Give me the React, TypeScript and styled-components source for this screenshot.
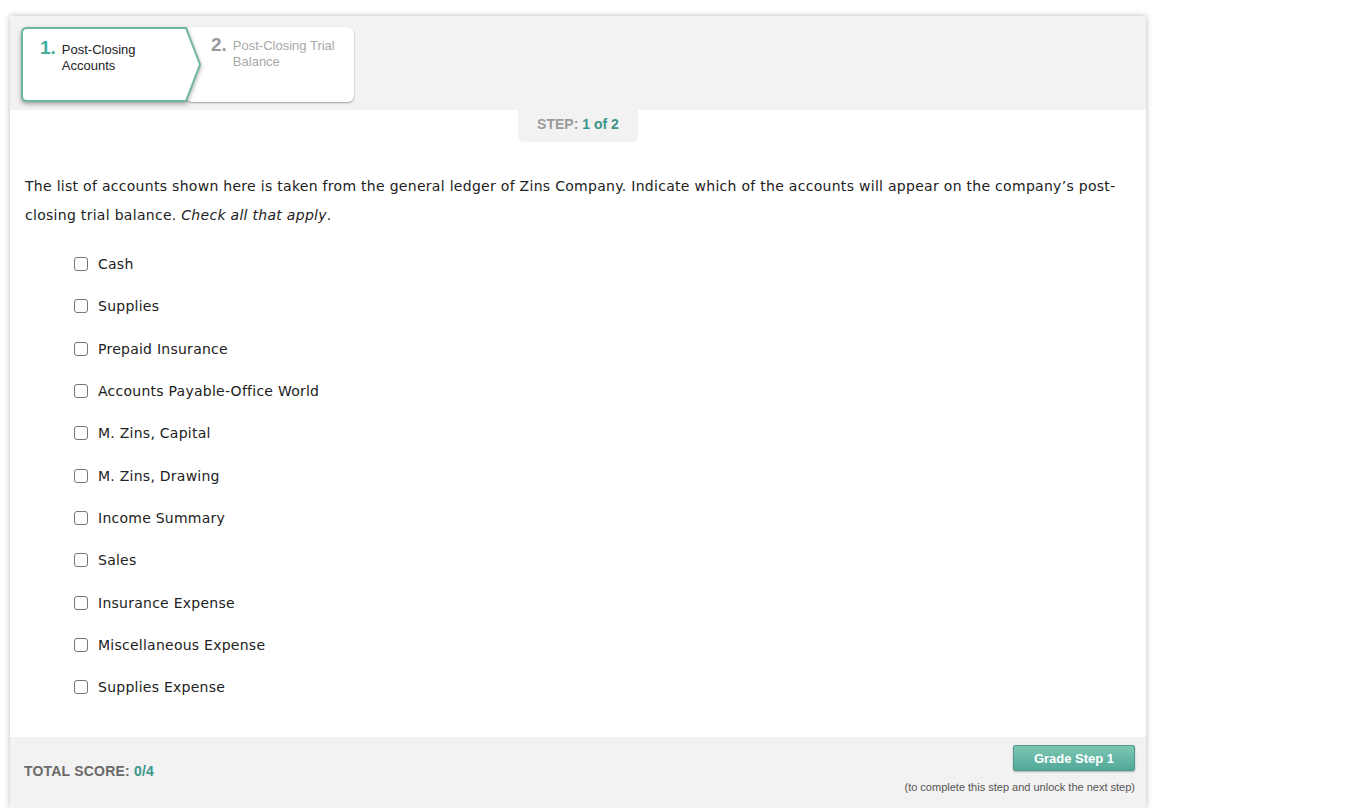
import styled, { createGlobalStyle } from 'styled-components'

const GlobalStyle = createGlobalStyle`
  html, body {
    margin: 0;
    padding: 0;
    background: #fff;
  }
  body {
    font-family: 'Liberation Sans', Arial, sans-serif;
  }
`

const accounts = [
  'Cash',
  'Supplies',
  'Prepaid Insurance',
  'Accounts Payable-Office World',
  'M. Zins, Capital',
  'M. Zins, Drawing',
  'Income Summary',
  'Sales',
  'Insurance Expense',
  'Miscellaneous Expense',
  'Supplies Expense',
]

const Page = styled.div`
  padding: 16px 0 0 10px;
`

const Card = styled.div`
  width: 1136px;
  height: 792px;
  display: flex;
  flex-direction: column;
  background: #fff;
  box-shadow: 0 0 6px rgba(0, 0, 0, 0.28);
`

const Header = styled.div`
  background: #f2f2f2;
  height: 94px;
  padding: 11px 0 0 11px;
  box-sizing: border-box;
  display: flex;
  align-items: flex-start;
`

const Tab = styled.div<{ $active?: boolean }>`
  position: relative;
  height: 75px;
  box-sizing: border-box;
  display: flex;
  align-items: flex-start;
  font-family: 'Liberation Sans', Arial, sans-serif;
  ${({ $active }) =>
    $active
      ? `
    width: 180px;
    padding: 11px 0 0 19px;
    z-index: 2;
  `
      : `
    width: 168px;
    margin-left: -15px;
    padding: 8px 0 0 25px;
    background: #fff;
    border-radius: 6px;
    box-shadow: 0 1px 2px rgba(0,0,0,0.35);
    z-index: 1;
  `}
`

const TabShape = styled.svg`
  position: absolute;
  left: 0;
  top: 0;
  width: 180px;
  height: 75px;
  overflow: visible;
  filter: drop-shadow(0 2px 2px rgba(0, 0, 0, 0.35));
`

const TabNum = styled.span<{ $active?: boolean }>`
  position: relative;
  font-size: 19px;
  font-weight: bold;
  color: ${({ $active }) => ($active ? '#3fae9c' : '#9a9a9a')};
  margin-right: 6px;
  line-height: 20px;
`

const TabLabel = styled.span<{ $active?: boolean }>`
  position: relative;
  font-size: 13px;
  line-height: 16px;
  color: ${({ $active }) => ($active ? '#222' : '#a8a8a8')};
  padding-top: ${({ $active }) => ($active ? '4px' : '3px')};
  width: 112px;
`

const StepWrap = styled.div`
  display: flex;
  justify-content: center;
`

const StepPill = styled.div`
  width: 120px;
  height: 32px;
  box-sizing: border-box;
  padding-top: 6px;
  background: #f2f2f2;
  border-radius: 0 0 6px 6px;
  display: flex;
  align-items: flex-start;
  justify-content: center;
  font-family: 'Liberation Sans', Arial, sans-serif;
  font-size: 14px;
  font-weight: bold;
  color: #9a9a9a;
`

const Teal = styled.span`
  color: #3a9488;
  margin-left: 4px;
`

const Body = styled.div`
  flex: 1;
  padding: 30px 15px 0 15px;
  font-family: 'DejaVu Sans', Verdana, sans-serif;
  font-size: 14px;
  color: #222;
`

const Prompt = styled.p`
  margin: 0;
  line-height: 29px;
  letter-spacing: 0.29px;
`

const List = styled.div`
  display: flex;
  flex-direction: column;
  margin-top: 13px;
  padding-left: 49px;
`

const Row = styled.label`
  display: flex;
  align-items: center;
  height: 42.3px;
  letter-spacing: 0.25px;
`

const Box = styled.input`
  appearance: none;
  width: 14px;
  height: 14px;
  box-sizing: border-box;
  border: 1px solid #767676;
  border-radius: 3px;
  background: #fff;
  margin: 0 10px 0 0;
`

const Footer = styled.div`
  height: 71px;
  background: #f2f2f2;
  display: flex;
  justify-content: space-between;
  padding: 8px 11px 0 14px;
  box-sizing: border-box;
  font-family: 'Liberation Sans', Arial, sans-serif;
`

const Score = styled.div`
  font-size: 14px;
  font-weight: bold;
  color: #6a6a6a;
  margin-top: 18px;
  letter-spacing: 0.2px;
  span {
    color: #3a9488;
  }
`

const Actions = styled.div`
  display: flex;
  flex-direction: column;
  align-items: flex-end;
`

const GradeButton = styled.button`
  width: 122px;
  height: 26px;
  border: 1px solid #4c9d8d;
  border-radius: 2px;
  background: linear-gradient(#7dc6b3, #52a999);
  box-shadow: 0 1px 2px rgba(0, 0, 0, 0.3);
  color: #fff;
  font-family: 'Liberation Sans', Arial, sans-serif;
  font-size: 13px;
  font-weight: bold;
  padding: 0;
  cursor: pointer;
`

const Hint = styled.div`
  margin-top: 10px;
  font-size: 11px;
  color: #555;
`

export default function App() {
  return (
    <Page>
      <GlobalStyle />
      <Card>
        <Header>
          <Tab $active>
            <TabShape viewBox="0 0 180 75">
              <path
                d="M6 1 H165 L179 37.5 L165 74 H6 Q1 74 1 69 V6 Q1 1 6 1 Z"
                fill="#fff"
                stroke="#6fb5a4"
                strokeWidth="2"
              />
            </TabShape>
            <TabNum $active>1.</TabNum>
            <TabLabel $active>Post-Closing Accounts</TabLabel>
          </Tab>
          <Tab>
            <TabNum>2.</TabNum>
            <TabLabel>Post-Closing Trial Balance</TabLabel>
          </Tab>
        </Header>
        <StepWrap>
          <StepPill>
            STEP:<Teal>1 of 2</Teal>
          </StepPill>
        </StepWrap>
        <Body>
          <Prompt>
            The list of accounts shown here is taken from the general ledger of Zins Company.
            Indicate which of the accounts will appear on the company’s post-closing trial
            balance. <em>Check all that apply</em>.
          </Prompt>
          <List>
            {accounts.map((a) => (
              <Row key={a}>
                <Box type="checkbox" />
                {a}
              </Row>
            ))}
          </List>
        </Body>
        <Footer>
          <Score>
            TOTAL SCORE: <span>0/4</span>
          </Score>
          <Actions>
            <GradeButton>Grade Step 1</GradeButton>
            <Hint>(to complete this step and unlock the next step)</Hint>
          </Actions>
        </Footer>
      </Card>
    </Page>
  )
}
